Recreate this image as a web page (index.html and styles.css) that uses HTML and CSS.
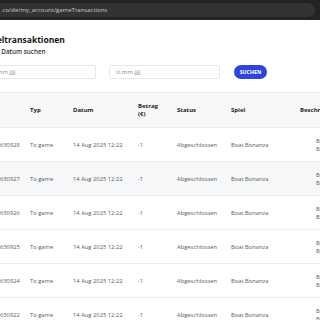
FILE: index.html
```html
<!DOCTYPE html>
<html lang="de">
<head>
    <meta charset="UTF-8">
    <meta name="viewport" content="width=device-width, initial-scale=1.0">
    <title>Spieltransaktionen</title>
    <link rel="stylesheet" href="styles.css">
</head>
<body>
    <div class="browser-bar">
        <div class="url-field">.co/de/my_account/gameTransactions</div>
    </div>

    <main class="page">
        <h1>Spieltransaktionen</h1>
        <p class="hint">Nach Datum suchen</p>

        <form class="filter" onsubmit="return false">
            <input class="date-input from" type="text" placeholder="tt.mm.jjjj">
            <input class="date-input to" type="text" placeholder="tt.mm.jjjj">
            <button class="search-button" type="submit">SUCHEN</button>
        </form>

        <table class="transactions">
            <colgroup>
                <col class="c-id">
                <col class="c-type">
                <col class="c-date">
                <col class="c-amount">
                <col class="c-status">
                <col class="c-game">
                <col class="c-desc">
            </colgroup>
            <thead>
                <tr>
                    <th>ID</th>
                    <th>Typ</th>
                    <th>Datum</th>
                    <th>Betrag (€)</th>
                    <th>Status</th>
                    <th>Spiel</th>
                    <th>Beschreibung</th>
                </tr>
            </thead>
            <tbody>
                <tr>
                    <td>115630928</td>
                    <td>To game</td>
                    <td>14 Aug 2025 12:22</td>
                    <td>-1</td>
                    <td>Abgeschlossen</td>
                    <td>Boat Bonanza</td>
                    <td class="desc">Bet<br>Boat Bonanza</td>
                </tr>
                <tr class="active">
                    <td>115630927</td>
                    <td>To game</td>
                    <td>14 Aug 2025 12:22</td>
                    <td>-1</td>
                    <td>Abgeschlossen</td>
                    <td>Boat Bonanza</td>
                    <td class="desc">Bet<br>Boat Bonanza</td>
                </tr>
                <tr>
                    <td>115630926</td>
                    <td>To game</td>
                    <td>14 Aug 2025 12:22</td>
                    <td>-1</td>
                    <td>Abgeschlossen</td>
                    <td>Boat Bonanza</td>
                    <td class="desc">Bet<br>Boat Bonanza</td>
                </tr>
                <tr>
                    <td>115630925</td>
                    <td>To game</td>
                    <td>14 Aug 2025 12:22</td>
                    <td>-1</td>
                    <td>Abgeschlossen</td>
                    <td>Boat Bonanza</td>
                    <td class="desc">Bet<br>Boat Bonanza</td>
                </tr>
                <tr>
                    <td>115630924</td>
                    <td>To game</td>
                    <td>14 Aug 2025 12:22</td>
                    <td>-1</td>
                    <td>Abgeschlossen</td>
                    <td>Boat Bonanza</td>
                    <td class="desc">Bet<br>Boat Bonanza</td>
                </tr>
                <tr>
                    <td>115630922</td>
                    <td>To game</td>
                    <td>14 Aug 2025 12:22</td>
                    <td>-1</td>
                    <td>Abgeschlossen</td>
                    <td>Boat Bonanza</td>
                    <td class="desc">Bet<br>Boat Bonanza</td>
                </tr>
            </tbody>
        </table>
    </main>
</body>
</html>
```

FILE: styles.css
```css
body {
    margin: 0;
    padding: 0;
    width: 320px;
    height: 320px;
    overflow: hidden;
    background-color: #fff;
    font-family: "Open Sans", Arial, sans-serif;
}
.browser-bar {
    height: 20px;
    box-sizing: border-box;
    padding: 3px 5px 3px 0;
    background-color: #232323;
}
.url-field {
    height: 14px;
    line-height: 14px;
    padding-left: 1px;
    border-radius: 0 7px 7px 0;
    background-color: #333;
    color: #c9c9c9;
    font-size: 6px;
    white-space: nowrap;
}
.page {
    margin-left: -16px;
    padding-top: 15px;
}
h1 {
    margin: 0;
    font-size: 8.5px;
    line-height: 10px;
    font-weight: 700;
    color: #151515;
}
.hint {
    margin: 3px 0 0;
    font-size: 6.3px;
    line-height: 8px;
    font-weight: 600;
    color: #333;
}
.filter {
    display: flex;
    align-items: center;
    gap: 13px;
    margin-top: 9px;
}
.date-input {
    box-sizing: border-box;
    height: 14px;
    padding: 0 6px;
    border: 1px solid #e6e6e6;
    border-radius: 2px;
    font-family: inherit;
    font-size: 6px;
    color: #333;
    outline: none;
}
.date-input::placeholder {
    color: #8a8a8a;
}
.date-input.from {
    width: 112px;
}
.date-input.to {
    width: 111px;
}
.search-button {
    width: 33px;
    height: 14px;
    margin-left: 1px;
    padding: 0;
    border: none;
    border-radius: 7px;
    background-color: #2f45d8;
    color: #fff;
    font-family: inherit;
    font-size: 5.3px;
    font-weight: 700;
    cursor: pointer;
}
.transactions {
    margin-top: 13px;
    width: 380px;
    table-layout: fixed;
    border-collapse: collapse;
}
.c-id { width: 40px; }
.c-type { width: 43px; }
.c-date { width: 65px; }
.c-amount { width: 39px; }
.c-status { width: 54px; }
.c-game { width: 69px; }
.c-desc { width: 70px; }
.transactions th {
    height: 34px;
    padding: 0 6px;
    border-top: 1px solid #ececec;
    background-color: #f7f7f8;
    text-align: left;
    font-size: 6px;
    line-height: 8px;
    font-weight: 700;
    color: #1e1e1e;
}
.transactions td {
    height: 33px;
    padding: 0 6px;
    border-top: 1px solid #ededed;
    font-size: 5.8px;
    line-height: 8px;
    color: #5a5a5a;
    white-space: nowrap;
}
.transactions tr.active td {
    background-color: #f6f7f9;
}
.transactions td.desc {
    padding-left: 22px;
}
```
